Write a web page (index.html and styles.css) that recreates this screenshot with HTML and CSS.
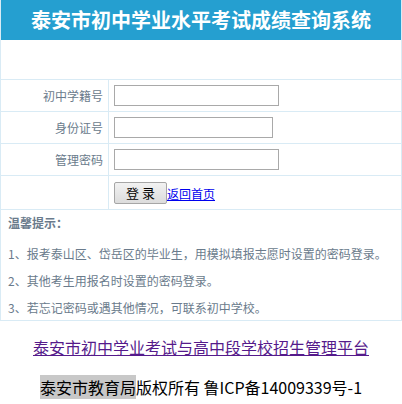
FILE: index.html
```html
<!DOCTYPE html>
<html lang="zh-CN">
<head>
    <meta charset="UTF-8">
    <meta name="viewport" content="width=device-width, initial-scale=1.0">
    <title>泰安市初中学业水平考试成绩查询系统</title>
    <link rel="stylesheet" href="styles.css">
</head>
<body>
    <div class="panel">
        <div class="title">泰安市初中学业水平考试成绩查询系统</div>
        <div class="blank-row"></div>
        <div class="form-row">
            <div class="label">初中学籍号</div>
            <div class="field"><input class="text-input" type="text"></div>
        </div>
        <div class="form-row">
            <div class="label">身份证号</div>
            <div class="field"><input class="text-input short" type="text"></div>
        </div>
        <div class="form-row">
            <div class="label">管理密码</div>
            <div class="field"><input class="text-input" type="password"></div>
        </div>
        <div class="form-row button-row">
            <div class="label"></div>
            <div class="field">
                <button class="login-btn">登 录</button><a class="back-link" href="#">返回首页</a>
            </div>
        </div>
        <div class="tips">
            <p class="tips-head">温馨提示：</p>
            <p>1、报考泰山区、岱岳区的毕业生，用模拟填报志愿时设置的密码登录。</p>
            <p>2、其他考生用报名时设置的密码登录。</p>
            <p>3、若忘记密码或遇其他情况，可联系初中学校。</p>
        </div>
    </div>

    <div class="footer">
        <p><a class="platform-link" href="#">泰安市初中学业考试与高中段学校招生管理平台</a></p>
        <p class="copyright"><span class="mark">泰安市教育局</span>版权所有 鲁ICP备14009339号-1</p>
    </div>
</body>
</html>
```

FILE: styles.css
```css
body {
    margin: 0;
    font-family: "Noto Sans CJK SC", "Noto Sans", sans-serif;
    background: #fff;
}
.panel {
    width: 400px;
    border: 1px solid #d9ebf5;
    border-top: none;
}
.title {
    height: 40px;
    line-height: 40px;
    background-color: #259fd0;
    color: #fff;
    font-size: 20px;
    font-weight: bold;
    text-align: center;
}
.blank-row {
    height: 39px;
    border-bottom: 1px solid #d9ebf5;
}
.form-row {
    display: grid;
    grid-template-columns: 108px 1fr;
    height: 31px;
    border-bottom: 1px solid #d9ebf5;
}
.label {
    border-right: 1px solid #d9ebf5;
    text-align: right;
    padding-right: 5px;
    font-size: 12px;
    line-height: 31px;
    color: #6a7b8c;
}
.field {
    display: flex;
    align-items: center;
    padding-left: 5px;
}
.text-input {
    box-sizing: border-box;
    width: 165px;
    height: 21px;
    border: 1px solid #a9a9a9;
    padding: 1px 2px;
    margin: 0;
}
.text-input.short {
    width: 159px;
}
.button-row {
    height: 33px;
}
.login-btn {
    box-sizing: border-box;
    width: 53px;
    height: 22px;
    padding: 0;
    margin: 0;
    font-family: "Noto Sans CJK SC", sans-serif;
    font-size: 13px;
    color: #000;
    background: linear-gradient(#f2f2f2, #dcdcdc);
    border: 1px solid #a6a6a6;
    border-radius: 2px;
}
.back-link {
    font-size: 12px;
    color: #0000ee;
    margin-top: 2px;
}
.tips {
    padding: 0 7px;
    font-size: 12px;
    color: #6a7b8c;
}
.tips p {
    margin: 0;
    height: 27px;
    line-height: 27px;
}
.tips .tips-head {
    height: 30px;
    line-height: 25px;
    font-weight: bold;
}
.tips p:last-child {
    height: 26px;
}
.footer {
    width: 402px;
    text-align: center;
    font-size: 16px;
    padding-top: 15px;
}
.footer p {
    margin: 0 0 18px;
    line-height: 22px;
}
.platform-link {
    color: #551a8b;
}
.copyright {
    color: #000;
}
.mark {
    background-color: #c8c8c8;
}
```
